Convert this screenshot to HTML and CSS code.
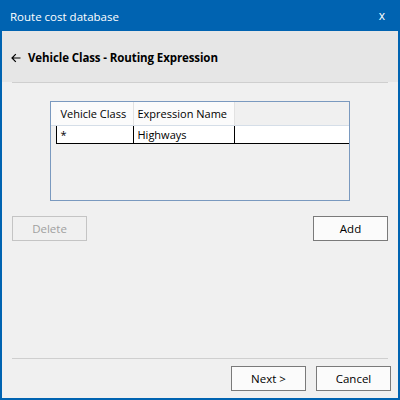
FILE: index.html
```html
<!DOCTYPE html>
<html>
<head>
<meta charset="utf-8">
<link rel="stylesheet" href="styles.css">
</head>
<body>
<div class="window">
  <div class="titlebar">
    <span class="title">Route cost database</span>
    <span class="close">x</span>
  </div>
  <div class="client">
    <div class="header">
      <span class="back"><svg width="10" height="10" viewBox="0 0 10 10"><path d="M1 5 H9.5 M4.8 1.2 L1 5 L4.8 8.8" fill="none" stroke="#000" stroke-width="1.2"/></svg></span>
      <span class="heading">Vehicle Class - Routing Expression</span>
    </div>
    <div class="sep"></div>
    <div class="main">
      <div class="grid">
        <div class="grow head">
          <div class="rh"></div>
          <div class="cell c1">Vehicle Class</div>
          <div class="cell c2">Expression Name</div>
          <div class="fill"></div>
        </div>
        <div class="grow data">
          <div class="cell c1">*</div>
          <div class="cell c2">Highways</div>
          <div class="fill"></div>
        </div>
      </div>
      <div class="actions">
        <button class="btn disabled">Delete</button>
        <button class="btn">Add</button>
      </div>
    </div>
    <div class="sep"></div>
    <div class="footer">
      <button class="btn">Next &gt;</button>
      <button class="btn">Cancel</button>
    </div>
  </div>
</div>
</body>
</html>
```

FILE: styles.css
```css
html, body {
  margin: 0;
  padding: 0;
}
body {
  width: 400px;
  height: 400px;
  overflow: hidden;
  font-family: "Open Sans", "Noto Sans", sans-serif;
}
.window {
  box-sizing: border-box;
  width: 400px;
  height: 400px;
  background: #0063b1;
  padding: 0 2px 2px 2px;
  display: flex;
  flex-direction: column;
}
.titlebar {
  height: 31px;
  flex: none;
  display: flex;
  align-items: center;
  justify-content: space-between;
  padding: 0 13px 0 8px;
  color: #ffffff;
  font-size: 11.5px;
}
.title {
  margin-top: 1px;
}
.close {
  font-size: 12px;
}
.client {
  flex: 1;
  background: #f0f0f0;
  display: flex;
  flex-direction: column;
}
.header {
  height: 51px;
  flex: none;
  background: #e6e6e6;
  display: flex;
  align-items: center;
  padding-left: 8px;
}
.back {
  width: 18px;
  height: 10px;
  margin-top: 2px;
  padding-left: 1px;
  box-sizing: border-box;
  display: flex;
  align-items: center;
}
.back svg {
  display: block;
}
.heading {
  font-weight: bold;
  font-size: 11.5px;
  color: #000;
  margin-top: 2px;
  letter-spacing: -0.1px;
}
.sep {
  height: 1px;
  margin: 0 10px;
  background: #cfcfcf;
  flex: none;
}
.main {
  flex: 1;
  display: flex;
  flex-direction: column;
  padding: 18px 10px 0 10px;
}
.grid {
  box-sizing: border-box;
  width: 300px;
  height: 100px;
  align-self: center;
  margin-left: -1px;
  border: 1px solid #7a99bf;
  background: #f0f0f0;
  font-size: 11px;
  color: #000;
}
.grow {
  display: flex;
}
.rh {
  width: 6px;
  flex: none;
  background: #fafafa;
}
.head {
  height: 23px;
  border-bottom: 1px solid #d5dee8;
}
.head .cell {
  background: #fbfbfb;
  border-right: 1px solid #e2e2e2;
  display: flex;
  align-items: center;
  padding-left: 4px;
}
.head .fill {
  flex: 1;
}
.data {
  height: 17px;
  border-bottom: 1px solid #000;
  margin-left: 5px;
}
.data .cell {
  background: #ffffff;
  border-left: 1px solid #000;
  display: flex;
  align-items: center;
  padding-left: 4px;
}
.data .fill {
  flex: 1;
  background: #ffffff;
  border-left: 1px solid #000;
}
.cell {
  box-sizing: border-box;
  flex: none;
  white-space: nowrap;
}
.head .c1 { width: 77px; }
.head .c2 { width: 101px; }
.data .c1 { width: 77px; }
.data .c2 { width: 101px; }
.actions {
  display: flex;
  justify-content: space-between;
  margin-top: 15px;
}
.btn {
  box-sizing: border-box;
  width: 75px;
  height: 25px;
  border: 1px solid #7a7a7a;
  background: #fbfbfb;
  font-family: "Open Sans", "Noto Sans", sans-serif;
  font-size: 11.5px;
  color: #000;
  padding: 0;
  margin: 0;
}
.btn.disabled {
  border-color: #c4c4c4;
  background: #f0f0f0;
  color: #a0a0a0;
}
.footer {
  height: 39px;
  flex: none;
  display: flex;
  justify-content: flex-end;
  gap: 10px;
  padding: 7px 7px 0 0;
  box-sizing: border-box;
}
```
